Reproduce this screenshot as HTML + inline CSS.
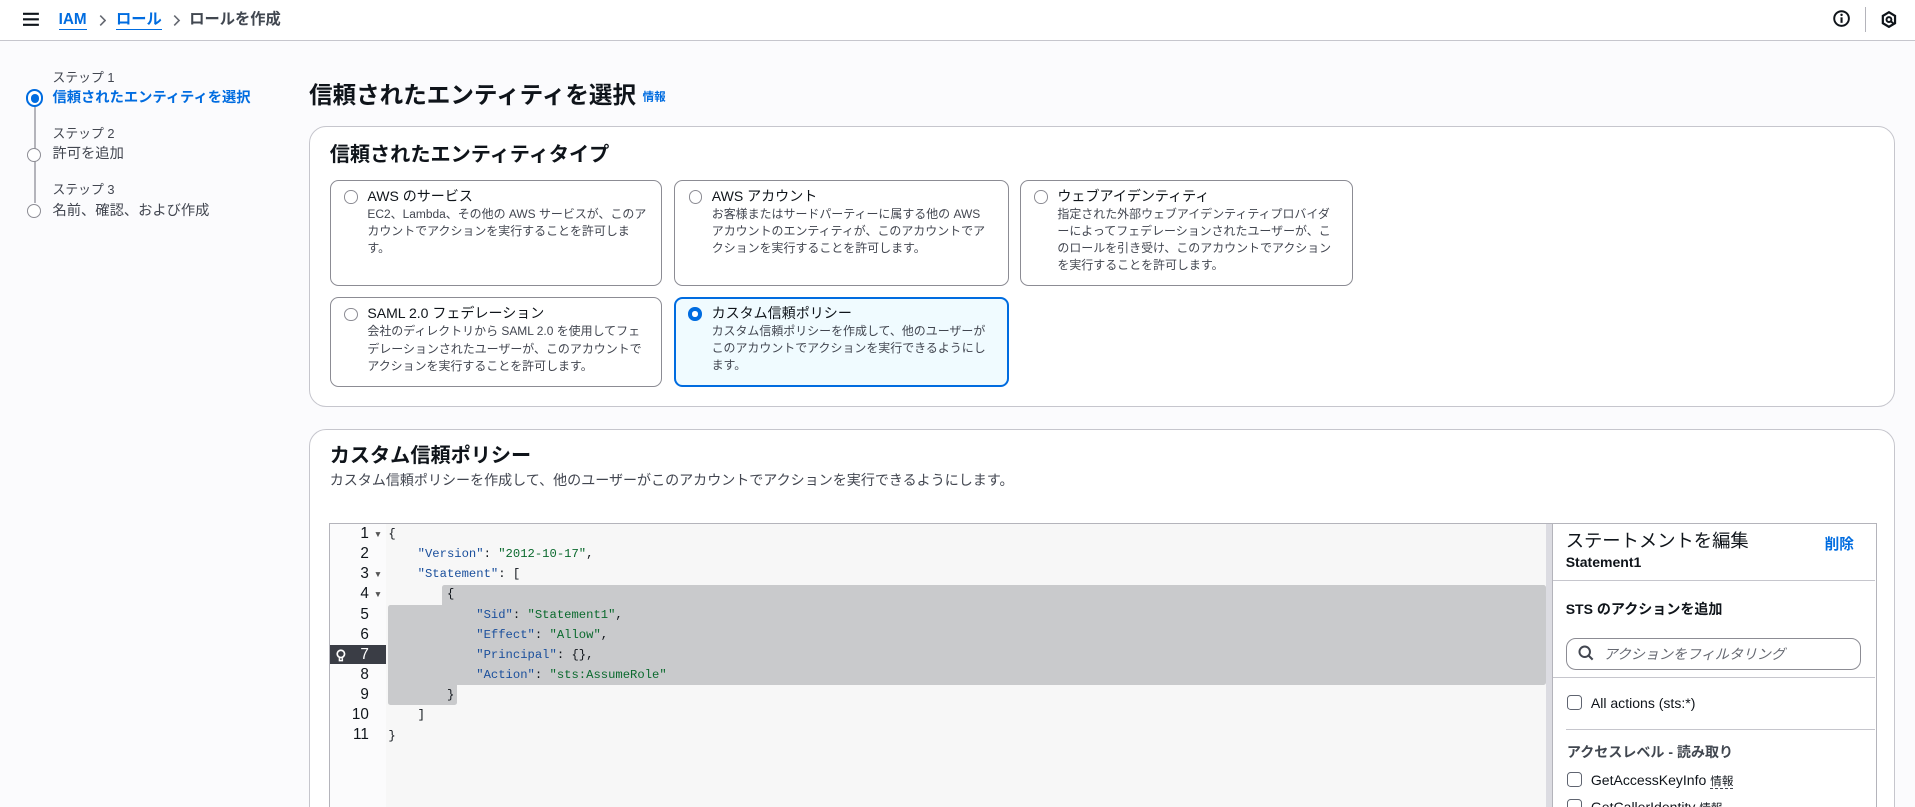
<!DOCTYPE html>
<html><head><meta charset="utf-8"><style>
html,body{margin:0;padding:0;overflow:hidden;width:1915px;height:807px;background:#fbfbfd}
#w{zoom:1.2213;position:relative;width:1568px;height:661px;font-family:"Liberation Sans","Noto Sans CJK JP",sans-serif;color:#0f141a}
.a{position:absolute;white-space:nowrap}
.top{position:absolute;left:0;top:0;width:1568px;height:33px;background:#fff;border-bottom:1px solid #c6c6cd}
.bc{font-size:12.5px;font-weight:bold;top:8px;line-height:16px}
.lnk{color:#006ce0;border-bottom:1px solid #006ce0;padding-bottom:1px}
.step{font-size:10.5px;color:#424650;line-height:13px}
.box{position:absolute;background:#fff;border:1px solid #c6c6cd;border-radius:14px}
.card{position:absolute;border:1px solid #8c8c94;border-radius:7px;background:#fff;box-sizing:border-box}
.card .r{position:absolute;left:11px;top:8px;width:11px;height:11px;border:1px solid #8c8c94;border-radius:50%;box-sizing:border-box}
.card .t{position:absolute;left:30px;top:6px;font-size:11.5px;line-height:14px}
.card .d{position:absolute;left:30px;top:21px;font-size:9.8px;line-height:14px;color:#424650;white-space:normal;width:230px}
.code{font-family:"Liberation Mono",monospace;font-size:10px}
.ln{position:absolute;width:32px;text-align:right;font-size:12.5px;line-height:16.5px;font-family:"Liberation Sans",sans-serif}
.tri{position:absolute;left:36px;font-size:7px;color:#555;line-height:16.5px}
.k{color:#1a4f9c}.s{color:#0b6a2e}
.cb{display:inline-block;width:11px;height:11px;border:1px solid #5f6470;border-radius:3px;vertical-align:-2px;margin-right:7px}
</style></head><body><div id="w">
<div class="top"></div>
<svg class="a" style="left:19px;top:10px" width="13" height="12"><path d="M0 1.5h13M0 6h13M0 10.5h13" stroke="#0f141a" stroke-width="1.8"/></svg>
<div class="a bc" style="left:48px"><span class="lnk">IAM</span></div>
<svg class="a" style="left:81px;top:12px" width="6" height="9"><path d="M1 0.5l4 4-4 4" fill="none" stroke="#656871" stroke-width="1.3"/></svg>
<div class="a bc" style="left:95px"><span class="lnk">ロール</span></div>
<svg class="a" style="left:142px;top:12px" width="6" height="9"><path d="M1 0.5l4 4-4 4" fill="none" stroke="#656871" stroke-width="1.3"/></svg>
<div class="a bc" style="left:155px;color:#414750">ロールを作成</div>
<svg class="a" style="left:1501px;top:8px" width="14" height="14"><circle cx="7" cy="7" r="6" fill="none" stroke="#0f141a" stroke-width="1.6"/><path d="M7 6v4.5" stroke="#0f141a" stroke-width="1.7"/><circle cx="7" cy="4" r="1" fill="#0f141a"/></svg>
<div class="a" style="left:1527px;top:6px;width:1px;height:20px;background:#b4b4bb"></div>
<svg class="a" style="left:1540px;top:9px" width="13" height="14"><path d="M6.5 1l5 3v6l-5 3-5-3V4z" fill="none" stroke="#0f141a" stroke-width="1.8"/><circle cx="6.5" cy="7" r="2" fill="none" stroke="#0f141a" stroke-width="1.6"/><path d="M8 8.5l2 1.5" stroke="#0f141a" stroke-width="1.6"/></svg>

<div class="a" style="left:28px;top:88px;width:1.5px;height:78px;background:#b4b4bb"></div>
<div class="a" style="left:21px;top:73px;width:11px;height:11px;border:2px solid #006ce0;border-radius:50%;background:#fff"></div>
<div class="a" style="left:25px;top:77px;width:7px;height:7px;border-radius:50%;background:#006ce0"></div>
<div class="a" style="left:22px;top:121px;width:10px;height:10px;border:1.5px solid #8c8c94;border-radius:50%;background:#fff"></div>
<div class="a" style="left:22px;top:167px;width:10px;height:10px;border:1.5px solid #8c8c94;border-radius:50%;background:#fff"></div>
<div class="a step" style="left:43px;top:57px">ステップ 1</div>
<div class="a" style="left:43px;top:73px;font-size:11.7px;line-height:15px;font-weight:bold;color:#006ce0">信頼されたエンティティを選択</div>
<div class="a step" style="left:43px;top:103px">ステップ 2</div>
<div class="a" style="left:43px;top:119px;font-size:11.7px;line-height:15px;color:#424650">許可を追加</div>
<div class="a step" style="left:43px;top:149px">ステップ 3</div>
<div class="a" style="left:43px;top:165px;font-size:11.7px;line-height:15px;color:#424650">名前、確認、および作成</div>

<div class="a" style="left:253px;top:66px;font-size:19.3px;line-height:24px;font-weight:bold">信頼されたエンティティを選択 <span style="font-size:9.5px;color:#006ce0;vertical-align:2px">情報</span></div>

<div class="box" style="left:253px;top:103px;width:1297px;height:229px"></div>
<div class="a" style="left:270px;top:116px;font-size:16.5px;line-height:22px;font-weight:bold">信頼されたエンティティタイプ</div>
<div class="card" style="left:270px;top:147px;width:272px;height:87px"><div class="r"></div><div class="t">AWS のサービス</div><div class="d">EC2、Lambda、その他の AWS サービスが、このアカウントでアクションを実行することを許可します。</div></div>
<div class="card" style="left:552px;top:147px;width:274px;height:87px"><div class="r"></div><div class="t">AWS アカウント</div><div class="d">お客様またはサードパーティーに属する他の AWS アカウントのエンティティが、このアカウントでアクションを実行することを許可します。</div></div>
<div class="card" style="left:835px;top:147px;width:273px;height:87px"><div class="r"></div><div class="t">ウェブアイデンティティ</div><div class="d">指定された外部ウェブアイデンティティプロバイダーによってフェデレーションされたユーザーが、このロールを引き受け、このアカウントでアクションを実行することを許可します。</div></div>
<div class="card" style="left:270px;top:243px;width:272px;height:74px"><div class="r"></div><div class="t">SAML 2.0 フェデレーション</div><div class="d">会社のディレクトリから SAML 2.0 を使用してフェデレーションされたユーザーが、このアカウントでアクションを実行することを許可します。</div></div>
<div class="card" style="left:552px;top:243px;width:274px;height:74px;border:2px solid #006ce0;background:#f0fbff"><div class="r" style="left:10px;top:7px;border:3.5px solid #006ce0;background:#fff"></div><div class="t" style="left:29px;top:5px">カスタム信頼ポリシー</div><div class="d" style="left:29px;top:20px">カスタム信頼ポリシーを作成して、他のユーザーがこのアカウントでアクションを実行できるようにします。</div></div>

<div class="box" style="left:253px;top:351px;width:1297px;height:340px"></div>
<div class="a" style="left:270px;top:363px;font-size:16.5px;line-height:22px;font-weight:bold">カスタム信頼ポリシー</div>
<div class="a" style="left:270px;top:386px;font-size:11.5px;line-height:15px;color:#424650">カスタム信頼ポリシーを作成して、他のユーザーがこのアカウントでアクションを実行できるようにします。</div>

<div class="a" style="left:269px;top:428px;width:1266px;height:240px;border:1px solid #b4b4bb;border-bottom:none;background:#fff"></div>
<div class="a" style="left:270px;top:429px;width:46px;height:240px;background:#fbfbfc"></div>
<div class="a" style="left:316px;top:429px;width:950px;height:240px;background:#f7f7f7"></div>
<div class="a" style="left:1266px;top:429px;width:5px;height:240px;background:#dcdce2"></div>
<div class="a" style="left:1271px;top:429px;width:1px;height:240px;background:#b4b4bb"></div>
<div class="a" style="left:362px;top:479px;width:904px;height:82px;background:#c9cacc;border-radius:2px"></div>
<div class="a" style="left:318px;top:495px;width:56px;height:82px;background:#c9cacc;border-radius:2px"></div>
<div class="a" style="left:270px;top:528px;width:46px;height:16px;background:#3a3d45"></div>
<svg class="a" style="left:275px;top:531px" width="8" height="11"><circle cx="4" cy="4" r="3" fill="none" stroke="#fff" stroke-width="1.4"/><path d="M2.8 7.5v2h2.4v-2" fill="none" stroke="#fff" stroke-width="1.2"/></svg>
<div class="a" style="left:270px;top:429px;width:1000px">
<div class="ln" style="top:0">1</div><div class="ln" style="top:16.5px">2</div><div class="ln" style="top:33px">3</div><div class="ln" style="top:49.5px">4</div><div class="ln" style="top:66px">5</div><div class="ln" style="top:82.5px">6</div><div class="ln" style="top:99px;color:#fff">7</div><div class="ln" style="top:115.5px">8</div><div class="ln" style="top:132px">9</div><div class="ln" style="top:148.5px">10</div><div class="ln" style="top:165px">11</div>
<div class="tri" style="top:0">▼</div><div class="tri" style="top:33px">▼</div><div class="tri" style="top:49.5px">▼</div>
</div>
<div class="a code" style="left:318px;top:429px;line-height:16.5px;white-space:pre">{
    <span class="k">"Version"</span>: <span class="s">"2012-10-17"</span>,
    <span class="k">"Statement"</span>: [
        {
            <span class="k">"Sid"</span>: <span class="s">"Statement1"</span>,
            <span class="k">"Effect"</span>: <span class="s">"Allow"</span>,
            <span class="k">"Principal"</span>: {},
            <span class="k">"Action"</span>: <span class="s">"sts:AssumeRole"</span>
        }
    ]
}</div>

<div class="a" style="left:1282px;top:433px;font-size:15px;line-height:20px;color:#0f141a">ステートメントを編集</div>
<div class="a" style="left:1494px;top:439px;font-size:12px;line-height:15px;font-weight:bold;color:#006ce0">削除</div>
<div class="a" style="left:1282px;top:453px;font-size:11.5px;line-height:15px;font-weight:bold">Statement1</div>
<div class="a" style="left:1272px;top:475px;width:263px;height:1px;background:#c6c6cd"></div>
<div class="a" style="left:1282px;top:491px;font-size:11.5px;line-height:15px;font-weight:bold">STS のアクションを追加</div>
<div class="a" style="left:1282px;top:522px;width:240px;height:25px;border:1px solid #8c8c94;border-radius:8px;background:#fff"></div>
<svg class="a" style="left:1292px;top:528px" width="13" height="13"><circle cx="5.5" cy="5.5" r="4.3" fill="none" stroke="#424650" stroke-width="1.6"/><path d="M8.6 8.6l3.4 3.4" stroke="#424650" stroke-width="1.7"/></svg>
<div class="a" style="left:1313px;top:528px;font-size:11.5px;line-height:15px;font-style:italic;color:#656871">アクションをフィルタリング</div>
<div class="a" style="left:1272px;top:554px;width:263px;height:1px;background:#c6c6cd"></div>
<div class="a" style="left:1283px;top:568px;font-size:11.5px;line-height:15px"><span class="cb"></span>All actions (sts:*)</div>
<div class="a" style="left:1282px;top:597px;width:253px;height:1px;background:#c6c6cd"></div>
<div class="a" style="left:1283px;top:608px;font-size:11.5px;line-height:15px;font-weight:bold;color:#414750">アクセスレベル - 読み取り</div>
<div class="a" style="left:1283px;top:631px;font-size:11.5px;line-height:15px"><span class="cb"></span>GetAccessKeyInfo <span style="font-size:9.5px;border-bottom:1px dashed #424650">情報</span></div>
<div class="a" style="left:1283px;top:653px;font-size:11.5px;line-height:15px"><span class="cb"></span>GetCallerIdentity <span style="font-size:9.5px">情報</span></div>
</div></body></html>
